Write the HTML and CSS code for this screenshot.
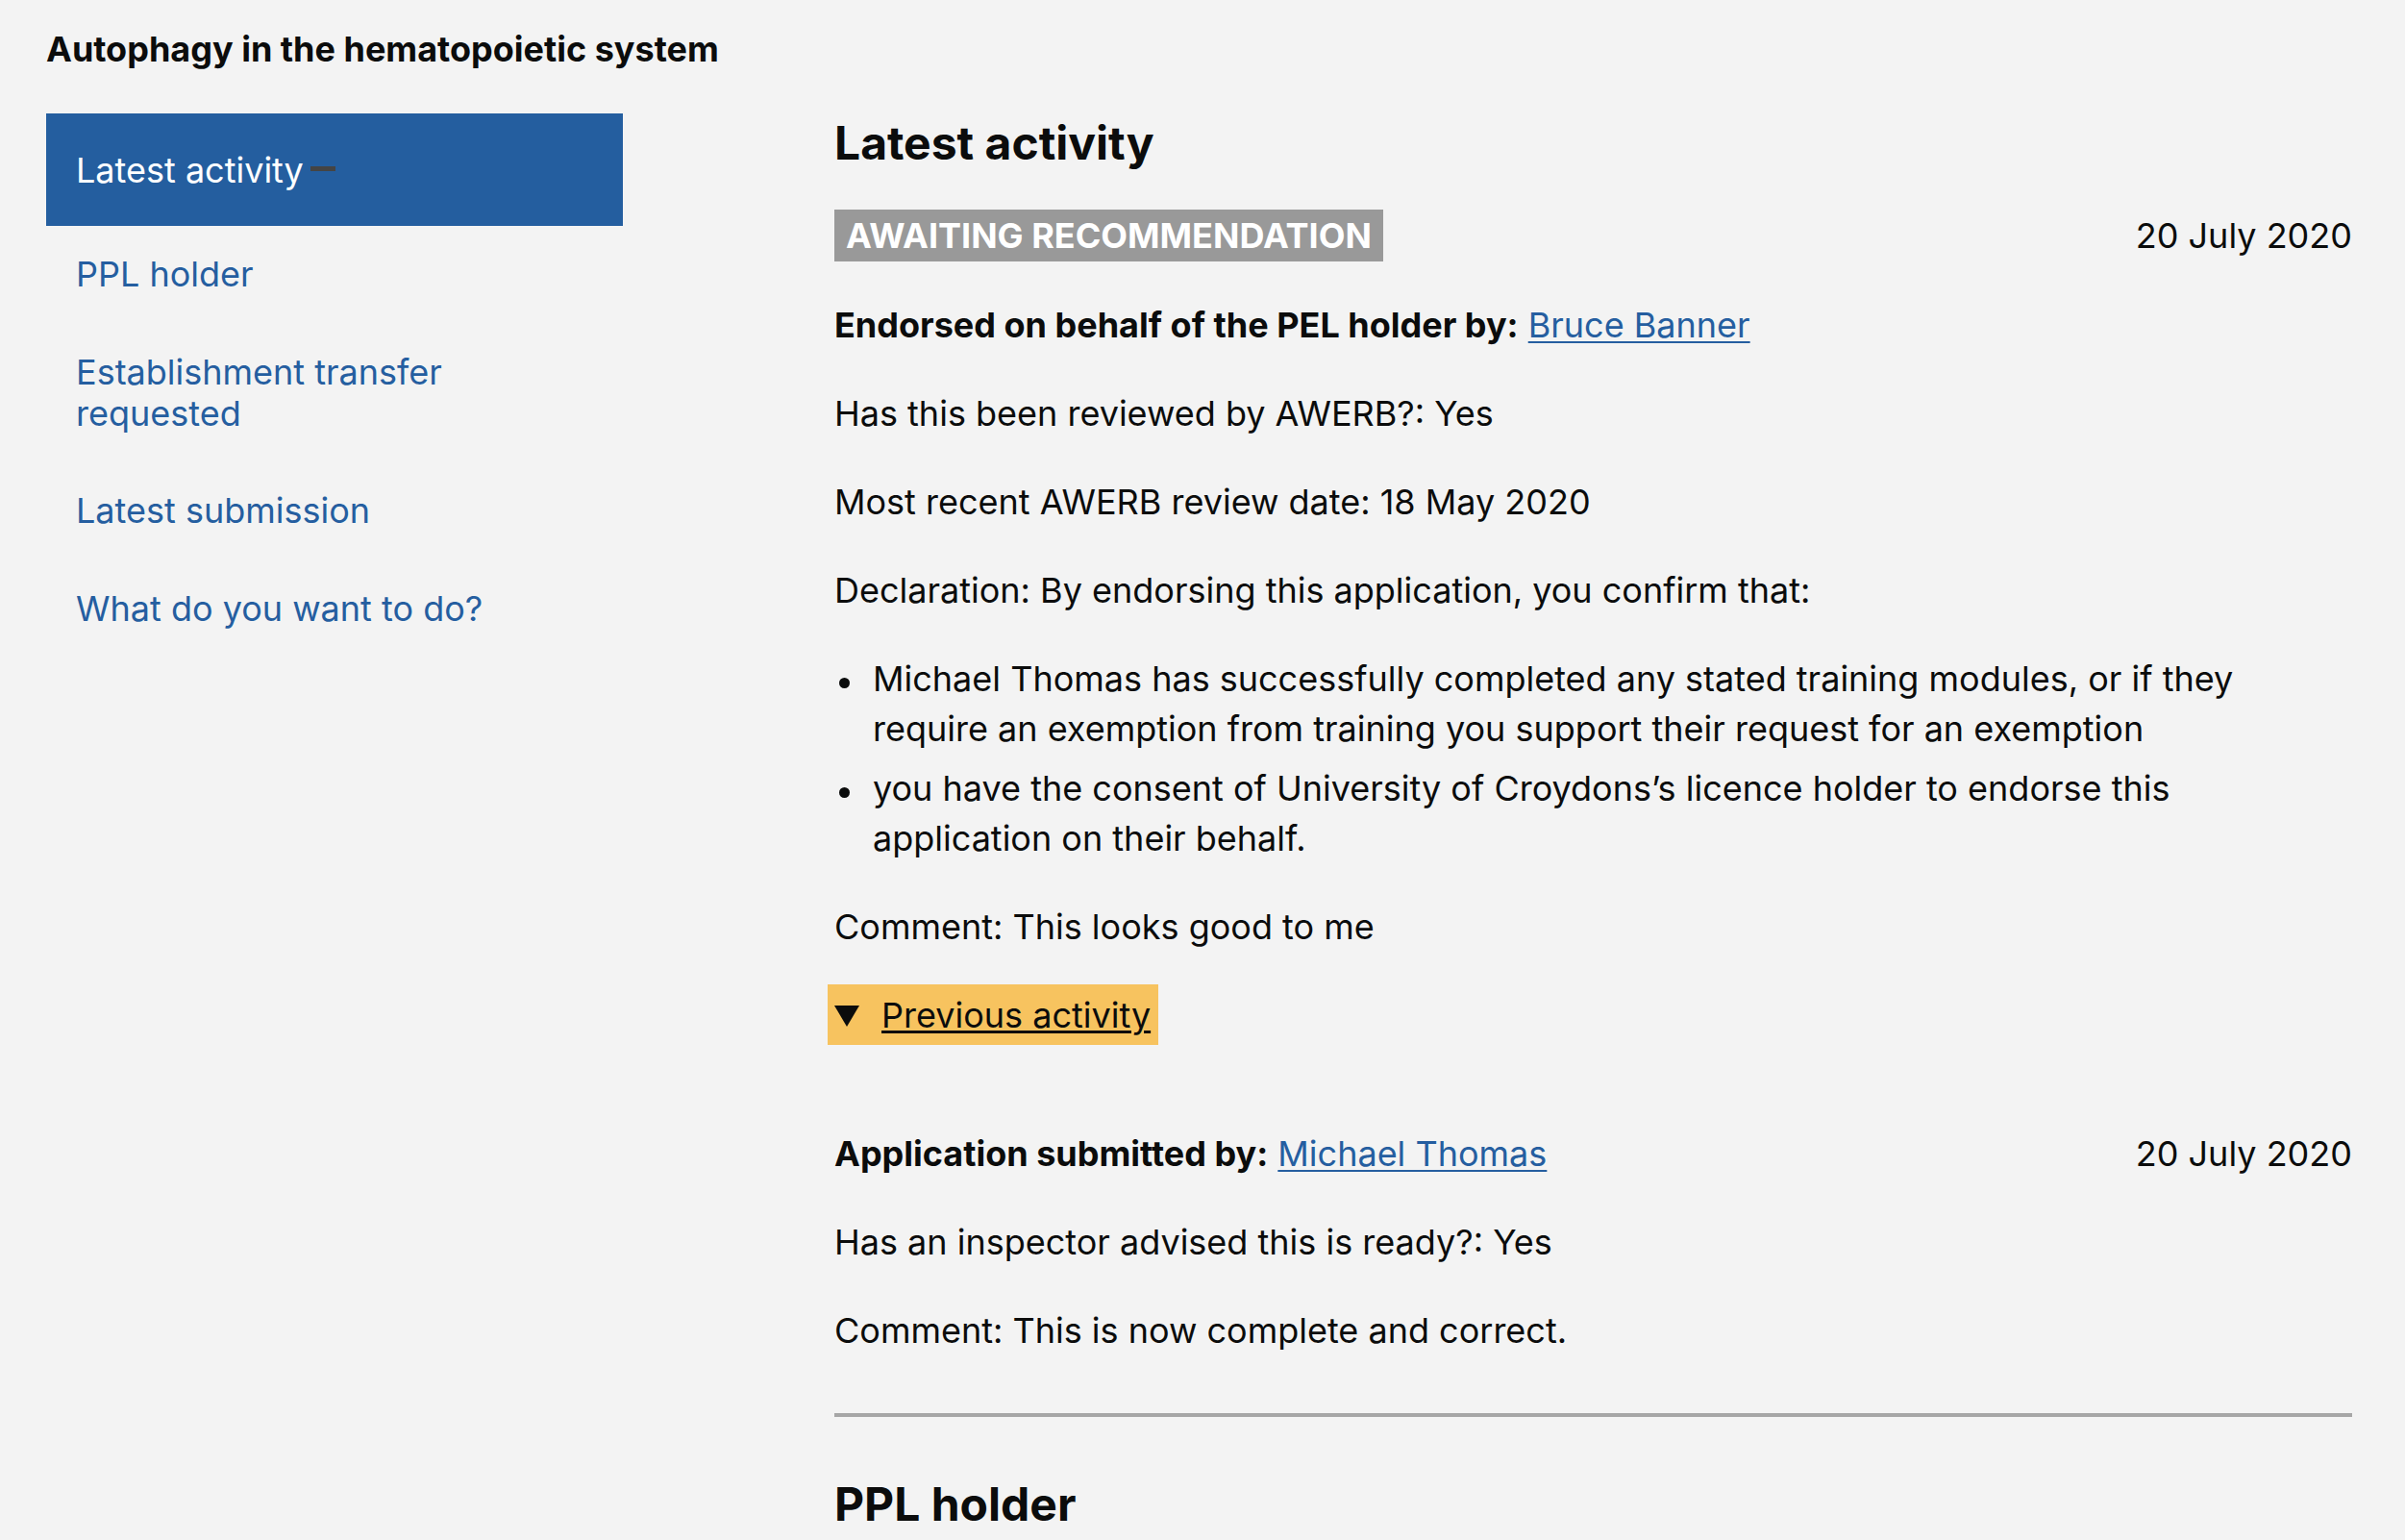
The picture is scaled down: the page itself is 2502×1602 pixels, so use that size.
FILE: index.html
```html
<!DOCTYPE html>
<html lang="en">
<head>
<meta charset="utf-8">
<title>Autophagy in the hematopoietic system</title>
<link rel="stylesheet" href="styles.css">
</head>
<body>
  <div class="site-title">Autophagy in the hematopoietic system</div>
  <div class="layout">
    <nav class="side-nav">
      <ul class="side-nav__list">
        <li><a class="side-nav__link side-nav__link--active" href="#latest-activity">Latest activity<span class="side-nav__marker"></span></a></li>
        <li><a class="side-nav__link" href="#ppl-holder">PPL holder</a></li>
        <li><a class="side-nav__link" href="#transfer">Establishment transfer requested</a></li>
        <li><a class="side-nav__link" href="#submission">Latest submission</a></li>
        <li><a class="side-nav__link" href="#actions">What do you want to do?</a></li>
      </ul>
    </nav>
    <main class="content">
      <h2 class="section-heading" id="latest-activity">Latest activity</h2>
      <div class="activity-head">
        <span class="status-tag">Awaiting recommendation</span>
        <span class="activity-date">20 July 2020</span>
      </div>
      <p class="text"><strong>Endorsed on behalf of the PEL holder by:</strong> <a class="link" href="#">Bruce Banner</a></p>
      <p class="text">Has this been reviewed by AWERB?: Yes</p>
      <p class="text">Most recent AWERB review date: 18 May 2020</p>
      <p class="text">Declaration: By endorsing this application, you confirm that:</p>
      <ul class="bullets">
        <li>Michael Thomas has successfully completed any stated training modules, or if they require an exemption from training you support their request for an exemption</li>
        <li>you have the consent of University of Croydons’s licence holder to endorse this application on their behalf.</li>
      </ul>
      <p class="text">Comment: This looks good to me</p>
      <details class="previous" open>
        <summary class="previous__summary"><span class="previous__arrow"></span><span class="previous__label">Previous activity</span></summary>
        <div class="previous__body">
          <div class="activity-row">
            <p class="text text--flush"><strong>Application submitted by:</strong> <a class="link" href="#">Michael Thomas</a></p>
            <span class="activity-date">20 July 2020</span>
          </div>
          <p class="text">Has an inspector advised this is ready?: Yes</p>
          <p class="text text--flush">Comment: This is now complete and correct.</p>
        </div>
      </details>
      <hr class="divider">
      <h2 class="section-heading" id="ppl-holder">PPL holder</h2>
    </main>
  </div>
</body>
</html>
```
FILE: styles.css
```css
html, body {
  margin: 0;
  background: #f3f3f3;
}
body {
  padding: 29px 55px 0 48px;
  font-family: "Inter", "Noto Sans", "Liberation Sans", sans-serif;
  font-size: 36px;
  color: #0b0c0c;
  height: 1602px;
  box-sizing: border-box;
  overflow: hidden;
}
.site-title {
  font-weight: 700;
  line-height: normal;
  margin: 0 0 45px;
}
.layout {
  display: grid;
  grid-template-columns: 600px 1fr;
  column-gap: 220px;
}
.side-nav__list {
  list-style: none;
  margin: 0;
  padding: 0;
}
.side-nav__link {
  display: block;
  padding: 29.5px 31px;
  line-height: 42.7px;
  color: #255ea0;
  text-decoration: none;
}
.side-nav__link--active {
  background: #245e9f;
  color: #ffffff;
  padding: 38px 31px 36px;
}
.side-nav__marker {
  display: inline-block;
  width: 26px;
  height: 5px;
  background: #444444;
  margin-left: 7px;
  vertical-align: 12px;
}
.content {
  min-width: 0;
}
.section-heading {
  font-size: 48px;
  font-weight: 700;
  line-height: normal;
  margin: 1px 0 40px;
}
.activity-head {
  display: flex;
  justify-content: space-between;
  align-items: center;
  margin-bottom: 40px;
}
.status-tag {
  background: #999999;
  color: #ffffff;
  font-weight: 700;
  text-transform: uppercase;
  line-height: normal;
  padding: 5px 12px;
}
.activity-date {
  line-height: 52px;
}
.text {
  margin: 0 0 40px;
  line-height: 52px;
}
.text--flush {
  margin-bottom: 0;
}
.text strong {
  font-weight: 700;
}
.link {
  color: #255ea0;
  text-decoration: underline;
  text-decoration-thickness: 2px;
  text-underline-offset: 4px;
}
.bullets {
  margin: 0 0 40px;
  padding-left: 40px;
  line-height: 52px;
  list-style: none;
}
.bullets li {
  position: relative;
}
.bullets li::before {
  content: "";
  position: absolute;
  left: -35px;
  top: 25px;
  width: 11px;
  height: 11px;
  border-radius: 50%;
  background: #0b0c0c;
}
.bullets li + li {
  margin-top: 10px;
}
.previous {
  margin: 0;
}
.previous__summary {
  display: inline-block;
  list-style: none;
  cursor: pointer;
  line-height: 52px;
  background: #f7c35f;
  padding: 6px 8px 5px 7px;
  margin: -6px 0 -5px -7px;
}
.previous__summary::-webkit-details-marker {
  display: none;
}
.previous__arrow {
  display: inline-block;
  width: 0;
  height: 0;
  border-left: 13.5px solid transparent;
  border-right: 13.5px solid transparent;
  border-top: 22px solid #0b0c0c;
  margin-right: 23px;
  vertical-align: 1px;
}
.previous__label {
  text-decoration: underline;
  text-decoration-thickness: 3px;
  text-underline-offset: 3px;
}
.previous__body {
  padding-top: 92px;
}
.activity-row {
  display: flex;
  justify-content: space-between;
  align-items: baseline;
  margin-bottom: 40px;
}
.divider {
  border: 0;
  border-top: 4px solid #a6a6a6;
  margin: 60px 0 61px;
  height: 0;
}
```
